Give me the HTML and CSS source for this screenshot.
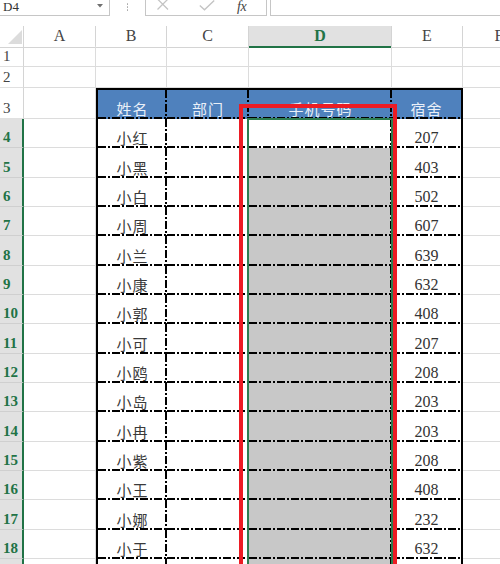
FILE: index.html
```html
<!DOCTYPE html>
<html lang="zh-CN">
<head>
<meta charset="utf-8">
<title>Sheet</title>
<link rel="stylesheet" href="styles.css">
</head>
<body>
<div class="app">
  <div class="fbar">
    <div class="namebox">
      <span class="nb-text">D4</span>
      <svg class="nb-arrow" width="6" height="4" viewBox="0 0 6 4"><polygon points="0,0 6,0 3,3.5" fill="#707070"/></svg>
    </div>
    <div class="dots"><i></i><i></i><i></i></div>
    <div class="fxbox">
      <svg class="ic-x" width="12" height="11" viewBox="0 0 12 11"><path d="M0.5 -1 L11 9.5 M11 -1 L0.5 9.5" stroke="#c4c4c4" stroke-width="1.3" fill="none"/></svg>
      <svg class="ic-check" width="16" height="11" viewBox="0 0 16 11"><path d="M0.8 5.5 L5.5 9.8 L15.2 0.5" stroke="#c4c4c4" stroke-width="1.4" fill="none"/></svg>
      <span class="fx">fx</span>
    </div>
    <div class="finput"></div>
  </div>

  <div class="sheet">
    <div class="row ch">
      <div class="corner"><svg width="24" height="20" viewBox="0 0 24 20"><polygon points="8,18 22,18 22,4" fill="#dcdcdc"/></svg></div>
      <div class="hc">A</div>
      <div class="hc">B</div>
      <div class="hc">C</div>
      <div class="hc sel">D</div>
      <div class="hc">E</div>
      <div class="hc">F</div>
    </div>

    <div class="row r12"><div class="rh">1</div><div class="c"></div><div class="c"></div><div class="c"></div><div class="c"></div><div class="c"></div><div class="c"></div></div>
    <div class="row r12"><div class="rh">2</div><div class="c"></div><div class="c"></div><div class="c"></div><div class="c"></div><div class="c"></div><div class="c"></div></div>

    <div class="row r3">
      <div class="rh">3</div><div class="c"></div>
      <div class="t hd first"><span class="zh">姓名</span></div>
      <div class="t hd"><span class="zh">部门</span></div>
      <div class="t hd"><span class="zh">手机号码</span></div>
      <div class="t hd last"><span class="zh">宿舍</span></div>
      <div class="c"></div>
    </div>

    <div class="row rd"><div class="rh sel">4</div><div class="c"></div><div class="t first"><span class="zh">小红</span></div><div class="t"></div><div class="t"></div><div class="t last"><span class="num">207</span></div><div class="c"></div></div>
    <div class="row rd"><div class="rh sel">5</div><div class="c"></div><div class="t first"><span class="zh">小黑</span></div><div class="t"></div><div class="t gray"></div><div class="t last"><span class="num">403</span></div><div class="c"></div></div>
    <div class="row rd"><div class="rh sel">6</div><div class="c"></div><div class="t first"><span class="zh">小白</span></div><div class="t"></div><div class="t gray"></div><div class="t last"><span class="num">502</span></div><div class="c"></div></div>
    <div class="row rd"><div class="rh sel">7</div><div class="c"></div><div class="t first"><span class="zh">小周</span></div><div class="t"></div><div class="t gray"></div><div class="t last"><span class="num">607</span></div><div class="c"></div></div>
    <div class="row rd"><div class="rh sel">8</div><div class="c"></div><div class="t first"><span class="zh">小兰</span></div><div class="t"></div><div class="t gray"></div><div class="t last"><span class="num">639</span></div><div class="c"></div></div>
    <div class="row rd"><div class="rh sel">9</div><div class="c"></div><div class="t first"><span class="zh">小康</span></div><div class="t"></div><div class="t gray"></div><div class="t last"><span class="num">632</span></div><div class="c"></div></div>
    <div class="row rd"><div class="rh sel">10</div><div class="c"></div><div class="t first"><span class="zh">小郭</span></div><div class="t"></div><div class="t gray"></div><div class="t last"><span class="num">408</span></div><div class="c"></div></div>
    <div class="row rd"><div class="rh sel">11</div><div class="c"></div><div class="t first"><span class="zh">小可</span></div><div class="t"></div><div class="t gray"></div><div class="t last"><span class="num">207</span></div><div class="c"></div></div>
    <div class="row rd"><div class="rh sel">12</div><div class="c"></div><div class="t first"><span class="zh">小鸥</span></div><div class="t"></div><div class="t gray"></div><div class="t last"><span class="num">208</span></div><div class="c"></div></div>
    <div class="row rd"><div class="rh sel">13</div><div class="c"></div><div class="t first"><span class="zh">小岛</span></div><div class="t"></div><div class="t gray"></div><div class="t last"><span class="num">203</span></div><div class="c"></div></div>
    <div class="row rd"><div class="rh sel">14</div><div class="c"></div><div class="t first"><span class="zh">小冉</span></div><div class="t"></div><div class="t gray"></div><div class="t last"><span class="num">203</span></div><div class="c"></div></div>
    <div class="row rd"><div class="rh sel">15</div><div class="c"></div><div class="t first"><span class="zh">小紫</span></div><div class="t"></div><div class="t gray"></div><div class="t last"><span class="num">208</span></div><div class="c"></div></div>
    <div class="row rd"><div class="rh sel">16</div><div class="c"></div><div class="t first"><span class="zh">小王</span></div><div class="t"></div><div class="t gray"></div><div class="t last"><span class="num">408</span></div><div class="c"></div></div>
    <div class="row rd"><div class="rh sel">17</div><div class="c"></div><div class="t first"><span class="zh">小娜</span></div><div class="t"></div><div class="t gray"></div><div class="t last"><span class="num">232</span></div><div class="c"></div></div>
    <div class="row rd"><div class="rh sel">18</div><div class="c"></div><div class="t first"><span class="zh">小于</span></div><div class="t"></div><div class="t gray"></div><div class="t last"><span class="num">632</span></div><div class="c"></div></div>
    <div class="row rd"><div class="rh sel"></div><div class="c"></div><div class="t first"></div><div class="t"></div><div class="t gray"></div><div class="t last"></div><div class="c"></div></div>

    <div class="sel-box"></div>
    <div class="red-box"></div>
  </div>
</div>
</body>
</html>
```

FILE: styles.css
```css
:root {
  --dh: repeating-linear-gradient(90deg, #000 0 8px, transparent 8px 10px, #000 10px 12px, transparent 12px 14px);
  --dv: repeating-linear-gradient(180deg, #000 0 8px, transparent 8px 10px, #000 10px 12px, transparent 12px 14px);
  --grid: #dcdcdc;
  --green: #217346;
}

html, body {
  margin: 0;
  padding: 0;
  background: #fff;
  height: 564px;
  overflow: hidden;
}

.app {
  width: 500px;
  height: 564px;
  overflow: hidden;
  font-family: "Liberation Serif", serif;
  color: #333;
}

/* formula bar */
.fbar {
  display: flex;
  height: 16px;
  margin-bottom: 10px;
}

.namebox {
  width: 110px;
  box-sizing: border-box;
  border-right: 1px solid #c6c6c6;
  border-bottom: 1px solid #c6c6c6;
  display: flex;
  justify-content: space-between;
  align-items: flex-start;
  padding: 0 6px 0 3px;
}

.nb-text {
  font-size: 13px;
  line-height: 14px;
  color: #333;
}

.nb-arrow {
  margin-top: 4px;
}

.dots {
  width: 35px;
  display: flex;
  flex-direction: column;
  align-items: center;
  padding-top: 3px;
  gap: 1.5px;
}

.dots i {
  display: block;
  width: 1.6px;
  height: 1.6px;
  background: #a8a8a8;
  border-radius: 50%;
}

.fxbox {
  width: 122px;
  box-sizing: border-box;
  border-left: 1px solid #c6c6c6;
  border-right: 1px solid #c6c6c6;
  border-bottom: 1px solid #c6c6c6;
  display: flex;
  align-items: flex-start;
  padding-left: 11px;
}

.ic-x {
  display: block;
}

.ic-check {
  display: block;
  margin-left: 30px;
}

.fx {
  margin-left: 22px;
  font-style: italic;
  font-size: 14px;
  line-height: 14px;
  color: #444;
  letter-spacing: -0.5px;
}

.finput {
  flex: 1;
  margin-left: 3px;
  border-left: 1px solid #c6c6c6;
  border-bottom: 1px solid #c6c6c6;
}

/* sheet */
.sheet {
  position: relative;
  width: 536px;
}

.row {
  display: grid;
  grid-template-columns: 24px 72px 71px 82px 143px 71px 73px;
}

.ch { height: 20px; }
.r12 { height: 21px; }
.r3 { height: 31px; }
.rd { height: 29.33px; }

.corner {
  box-sizing: border-box;
  border-right: 1px solid #d4d4d4;
  border-bottom: 1px solid #d4d4d4;
}

.corner svg { display: block; }

.hc {
  box-sizing: border-box;
  border-right: 1px solid #d4d4d4;
  border-bottom: 1px solid #d4d4d4;
  text-align: center;
  font-size: 16px;
  line-height: 20px;
  color: #444;
}

.hc.sel {
  background: #e1e1e1;
  border-bottom: 2px solid var(--green);
  color: var(--green);
  font-weight: bold;
}

.rh {
  box-sizing: border-box;
  border-right: 1px solid #d4d4d4;
  border-bottom: 1px solid #e0e0e0;
  font-size: 15px;
  line-height: 20px;
  color: #444;
  padding-left: 3px;
  display: flex;
  align-items: flex-end;
}

.rh.sel {
  background: #e1e1e1;
  color: var(--green);
  font-weight: bold;
  border-right: 2px solid var(--green);
  border-bottom: 1px solid #cfcfcf;
}

.c {
  box-sizing: border-box;
  border-right: 1px solid var(--grid);
  border-bottom: 1px solid var(--grid);
}

.t {
  box-sizing: border-box;
  display: flex;
  justify-content: center;
  align-items: flex-end;
  background-image: var(--dh), var(--dv);
  background-size: 100% 2px, 2px 100%;
  background-position: left bottom, right top;
  background-repeat: no-repeat;
}

.t.first {
  border-left: 2px solid #000;
}

.t.last {
  border-right: 2px solid #000;
  background-image: var(--dh);
  background-size: 100% 2px;
  background-position: left bottom;
}

.t.hd {
  background-color: #4f81bd;
  border-top: 2px solid #000;
}

.t.hd .zh {
  color: #e9eff8;
}

.t.gray {
  background-color: #c8c8c8;
}

.zh {
  font-family: "Noto Sans CJK SC", "Noto Sans", sans-serif;
  font-size: 15px;
  line-height: 20px;
  color: #3a3a3a;
  letter-spacing: 1px;
}

.num {
  font-family: "Liberation Serif", serif;
  font-size: 16px;
  line-height: 20px;
  color: #333;
}

/* overlays */
.sel-box {
  position: absolute;
  left: 247px;
  top: 92px;
  width: 146px;
  height: 520px;
  box-sizing: border-box;
  border: 2px solid #2d7d50;
}

.red-box {
  position: absolute;
  left: 239px;
  top: 78px;
  width: 158px;
  height: 520px;
  box-sizing: border-box;
  border: 4px solid #ec1c24;
  border-bottom: none;
}
```
